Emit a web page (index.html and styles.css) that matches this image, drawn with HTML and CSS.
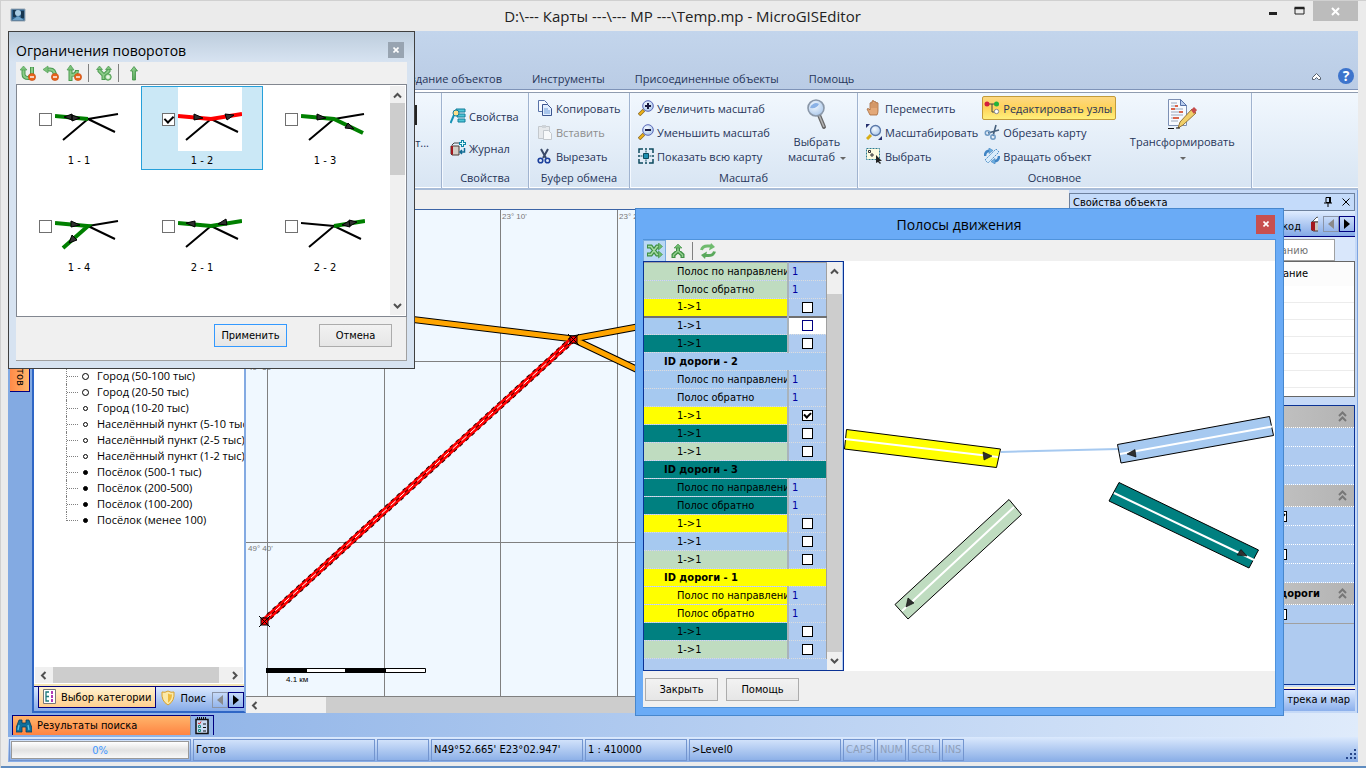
FILE: index.html
```html
<!DOCTYPE html>
<html lang="ru">

<head>
  <meta charset="UTF-8">
  <meta name="viewport" content="width=device-width, initial-scale=1.0">
  <title>D:\--- Карты ---\--- MP ---\Temp.mp - MicroGISEditor</title>
  <link rel="stylesheet" href="styles.css">
</head>

<body>
  <!-- shared shapes -->
  <svg class="defs" width="0" height="0" aria-hidden="true">
    <defs>
      <linearGradient id="green" x1="0" y1="0" x2="1" y2="1">
        <stop offset="0" stop-color="#a5dba0"/>
        <stop offset="1" stop-color="#3f9a45"/>
      </linearGradient>
      <radialGradient id="lens" cx="0.4" cy="0.35" r="0.7">
        <stop offset="0" stop-color="#f4faff"/>
        <stop offset="1" stop-color="#a9c6ea"/>
      </radialGradient>
      <symbol id="chev-up" viewBox="0 0 9 9"><path d="M1 6.500L4.500 3L8 6.500" fill="none" stroke="#505050" stroke-width="2"/></symbol>
      <symbol id="chev-down" viewBox="0 0 9 9"><path d="M1 3L4.500 6.500L8 3" fill="none" stroke="#505050" stroke-width="2"/></symbol>
      <symbol id="chev-left" viewBox="0 0 9 9"><path d="M6.500 1L3 4.500L6.500 8" fill="none" stroke="#505050" stroke-width="2"/></symbol>
      <symbol id="chev-right" viewBox="0 0 9 9"><path d="M3 1L6.500 4.500L3 8" fill="none" stroke="#505050" stroke-width="2"/></symbol>
      <symbol id="collapse" viewBox="0 0 9 11"><path d="M1 5L4.500 1.500L8 5M1 10L4.500 6.500L8 10" fill="none" stroke="#777" stroke-width="2"/></symbol>
      <symbol id="minus-badge" viewBox="0 0 8 8"><circle cx="4" cy="4" r="3.600" fill="#e8641b" stroke="#c24a10" stroke-width=".6"/><path d="M2 4h4" stroke="#fff" stroke-width="1.400"/></symbol>
      <symbol id="book" viewBox="0 0 18 18">
        <path d="M2 7l5-5 2 1v4z" fill="#fff" stroke="#555"/>
        <path d="M1.500 7h8.500v9H3.500l-2-1z" fill="#c9c4bc" stroke="#4a3a34"/>
        <path d="M1 7h4v9L1 15z" fill="#a3171c"/>
      </symbol>
    </defs>
  </svg>

  <header class="titlebar">
    <svg class="app-icon" width="16" height="14" viewBox="0 0 16 14">
      <path d="M1 1h14v12H1z" fill="#2c5f8a" stroke="#9aa8b4"/>
      <path d="M3 2h3v7H3zM11 3h3v7h-3z" fill="#173650"/>
      <circle cx="8" cy="5" r="3" fill="#a9cce3"/>
      <path d="M2 12l6-4 6 4z" fill="#6fa3c9"/>
    </svg>
    <h1 class="app-title">D:\--- Карты ---\--- MP ---\Temp.mp - MicroGISEditor</h1>
    <div class="window-buttons">
      <button type="button" aria-label="Свернуть"><svg width="10" height="12" viewBox="0 0 10 12"><path d="M1 8.500h8" stroke="#222" stroke-width="3"/></svg></button>
      <button type="button" aria-label="Развернуть"><svg width="11" height="12" viewBox="0 0 11 12"><path d="M1 3h9v6H1z" fill="none" stroke="#222"/><path d="M.5 3h10" stroke="#222" stroke-width="2.500"/></svg></button>
      <button type="button" class="window-close" aria-label="Закрыть"><svg width="9" height="9" viewBox="0 0 9 9"><path d="M1 1l7 7M8 1L1 8" stroke="#fff" stroke-width="2"/></svg></button>
    </div>
  </header>

  <main class="app">
    <nav class="ribbon-tabs">
      <a href="#create">Создание объектов</a>
      <a href="#tools">Инструменты</a>
      <a href="#joined">Присоединенные объекты</a>
      <a href="#help">Помощь</a>
      <span class="ribbon-tools">
        <button type="button" aria-label="Свернуть ленту"><svg width="11" height="9" viewBox="0 0 11 9"><path d="M1.500 5.500L5.500 1.500L9.500 5.500V7.500H7.500L5.500 5.500L3.500 7.500H1.500z" fill="#fff" stroke="#55606e"/></svg></button>
        <button type="button" class="help-button" aria-label="Справка">?</button>
      </span>
    </nav>

    <div class="ribbon">
      <section class="group group-first">
        <div class="group-body">
          <span class="clipped-button"><i></i>т...</span>
        </div>
      </section>

      <section class="group group-props">
        <div class="group-body">
          <div class="tool-column roomy">
            <button type="button" class="tool">
              <svg width="16" height="16" viewBox="0 0 16 16"><path d="M6 1h9v3H6zM7 6h8v3H7zM8 11h7v3H8z" fill="#4ec6d6" stroke="#137c9a"/><circle cx="6" cy="5" r="3" fill="#ffe08a" stroke="#137c9a"/><path d="M4 7l-3.500 8" stroke="#1390b4" stroke-width="2"/></svg>
              Свойства
            </button>
            <button type="button" class="tool">
              <svg width="16" height="16" viewBox="0 0 16 16"><path d="M1 6h8v9H2l-1-1z" fill="#d3cdc5" stroke="#4a3a34"/><path d="M1 6h2v9l-2-1z" fill="#a3171c"/><path d="M2 5l2-2h5" fill="none" stroke="#444"/><path d="M12.500 0v7M9 3.500h7" stroke="#0f86a6" stroke-width="3"/><path d="M12.500 1v5M10 3.500h5" stroke="#dff" /><path d="M14.500 8v4h-4m1.500-2l-2 2 2 2" fill="none" stroke="#0f6a92" stroke-width="1.500"/></svg>
              Журнал
            </button>
          </div>
        </div>
        <h2>Свойства</h2>
      </section>

      <section class="group group-clip">
        <div class="group-body">
          <div class="tool-column">
            <button type="button" class="tool">
              <svg width="16" height="16" viewBox="0 0 16 16"><path d="M1.500.5h6l3 3v8h-9z" fill="#f6faff" stroke="#5872a8"/><path d="M5.500 4.500h5l4 4v7h-9z" fill="#e2efff" stroke="#3c558f"/><path d="M7 9h4M7 11h6M7 13h6" stroke="#6f9bd8"/></svg>
              Копировать
            </button>
            <button type="button" class="tool" disabled>
              <svg width="16" height="16" viewBox="0 0 16 16"><path d="M1.500 2.500h11v12h-11z" fill="#e6e9ec" stroke="#c3c8cd"/><path d="M5 1h4v3H5z" fill="#cfd4d9"/><path d="M6.500 6.500h5l3 3v6h-8z" fill="#f7f9fa" stroke="#c3c8cd"/></svg>
              Вставить
            </button>
            <button type="button" class="tool">
              <svg width="16" height="16" viewBox="0 0 16 16"><path d="M4 1l5 9M11 1L6 10" stroke="#3b4a68" stroke-width="2"/><circle cx="3.500" cy="12.500" r="2.300" fill="none" stroke="#1b3f9c" stroke-width="1.600"/><circle cx="10.500" cy="12.500" r="2.300" fill="none" stroke="#1b3f9c" stroke-width="1.600"/></svg>
              Вырезать
            </button>
          </div>
        </div>
        <h2>Буфер обмена</h2>
      </section>

      <section class="group group-zoom">
        <div class="group-body">
          <div class="tool-column">
            <button type="button" class="tool">
              <svg width="16" height="16" viewBox="0 0 16 16"><path d="M6 10l-5 5" stroke="#8a6a2a" stroke-width="3.500"/><path d="M5.500 10.500l-4 4" stroke="#f0b416" stroke-width="2"/><circle cx="10" cy="6" r="5.300" fill="url(#lens)" stroke="#5a68b8"/><path d="M10 3v6M7 6h6" stroke="#1a1a40" stroke-width="2"/></svg>
              Увеличить масштаб
            </button>
            <button type="button" class="tool">
              <svg width="16" height="16" viewBox="0 0 16 16"><path d="M6 10l-5 5" stroke="#8a6a2a" stroke-width="3.500"/><path d="M5.500 10.500l-4 4" stroke="#f0b416" stroke-width="2"/><circle cx="10" cy="6" r="5.300" fill="url(#lens)" stroke="#5a68b8"/><path d="M7 6h6" stroke="#1a1a40" stroke-width="2"/></svg>
              Уменьшить масштаб
            </button>
            <button type="button" class="tool">
              <svg width="16" height="16" viewBox="0 0 16 16"><path d="M1 5V1h4M7 1h2M11 1h4v4M15 7v2M15 11v4h-4M9 15H7M5 15H1v-4M1 9V7" fill="none" stroke="#0c4a5e" stroke-width="1.500"/><path d="M5.500 5.500h5v5h-5z" fill="#1f8fb0" stroke="#0c4a5e"/><path d="M8 2.500v2M8 11.500v2M2.500 8h2M11.500 8h2" stroke="#0c4a5e"/></svg>
              Показать всю карту
            </button>
          </div>
          <button type="button" class="tool-big">
            <svg width="24" height="32" viewBox="0 0 24 32"><path d="M14 17l5 12" stroke="#666" stroke-width="4" stroke-linecap="round"/><path d="M14 17l5 12" stroke="#b5b5b5" stroke-width="1.500"/><circle cx="11" cy="10" r="8" fill="url(#lens)" stroke="#8a97a8" stroke-width="1.600"/><path d="M5 10a6 6 0 0 1 9-4q-2 5-9 4z" fill="#8bb2e6"/></svg>
            <span>Выбрать<br>масштаб <i class="drop"></i></span>
          </button>
        </div>
        <h2>Масштаб</h2>
      </section>

      <section class="group group-main">
        <div class="group-body">
          <div class="tool-column">
            <button type="button" class="tool">
              <svg width="16" height="16" viewBox="0 0 16 16"><path d="M4 15q-2-4-3-6 1-1 2 0l1 1V3q1-1 2 0V1q1-1 2 0v1q1-1 2 0v1q1-1 2 0v8q0 2-1 4z" fill="#e3a878" stroke="#a5683a" stroke-width=".8"/><path d="M6 3v5M8 3v5M10 3v5" stroke="#b87c4c" stroke-width=".7"/></svg>
              Переместить
            </button>
            <button type="button" class="tool">
              <svg width="16" height="16" viewBox="0 0 16 16"><path d="M0 0h4L0 4zM16 16h-4l4-4z" fill="#25306e"/><path d="M5 11l-4 4" stroke="#d8ad16" stroke-width="3"/><circle cx="9.500" cy="6.500" r="5" fill="url(#lens)" stroke="#5a78a8" stroke-width="1.300"/></svg>
              Масштабировать
            </button>
            <button type="button" class="tool">
              <svg width="16" height="16" viewBox="0 0 16 16"><path d="M.5.5h13v11H.5z" fill="#fdfbe0" stroke="#2a7a92" stroke-dasharray="2 1"/><path d="M2.500 2.500h2v2h-2zM5 6h2v2H5z" fill="#fff" stroke="#333"/><path d="M10 7l6 6h-3l2 2-1 1-2-2-2 1z" fill="#222"/></svg>
              Выбрать
            </button>
          </div>
          <div class="tool-column">
            <button type="button" class="tool active">
              <svg width="16" height="16" viewBox="0 0 16 16"><path d="M4 4h9M8 4v8h4" fill="none" stroke="#444"/><circle cx="3" cy="4" r="2.500" fill="#d31f3c"/><circle cx="12.500" cy="4" r="2.500" fill="#23b33a"/><circle cx="12.500" cy="11.500" r="2.200" fill="#fff" stroke="#888"/></svg>
              Редактировать узлы
            </button>
            <button type="button" class="tool">
              <svg width="16" height="16" viewBox="0 0 16 16"><path d="M4 9l11-3M9 12l3-11" stroke="#46607c" stroke-width="1.600"/><circle cx="3.500" cy="9" r="2.200" fill="none" stroke="#6f9ac4" stroke-width="1.500"/><circle cx="9" cy="13" r="2.200" fill="none" stroke="#6f9ac4" stroke-width="1.500"/></svg>
              Обрезать карту
            </button>
            <button type="button" class="tool">
              <svg width="16" height="16" viewBox="0 0 16 16"><path d="M1 12L12 1l3 3L4 15z" fill="#d9ecfb" stroke="#4f90c8" stroke-dasharray="2 1"/><path d="M1 8q0-5 5-5.500M15 8q0 5-5 5.500" fill="none" stroke="#3f84c4" stroke-width="2.500"/><path d="M5 0l4 2.500-4 3zM11 10.500l-4 3 4 2.500z" fill="#6fb0e0" stroke="#3f84c4" stroke-width=".6"/></svg>
              Вращать объект
            </button>
          </div>
          <button type="button" class="tool-big transform">
            <svg width="32" height="32" viewBox="0 0 32 32"><path d="M2.500 1.500h12l6 6v20h-18z" fill="#f7faff" stroke="#7d90b4"/><path d="M14.500 1.500v6h6z" fill="#b9cdee" stroke="#5872a8"/><path d="M5 5h6M5 8h7M5 11h12M5 14h12M5 17h12M5 20h8M5 23h7" stroke="#9aa7bb"/><path d="M9 8h3M5 11h4M13 14h4M7 20h6" stroke="#e0431c" stroke-width="1.300"/><path d="M12 30l2-6L26 11l4 4-13 12z" fill="#f1d06a" stroke="#96763a"/><path d="M25 12l3-3 3 3-3 4z" fill="#c44b4b"/><path d="M2 30.500h6M10 30h4" stroke="#111"/></svg>
            <span>Трансформировать<br><i class="drop"></i></span>
          </button>
        </div>
        <h2>Основное</h2>
      </section>
    </div>

    <div class="workspace">
      <aside class="side-dock">
        <button type="button" class="side-tab">объектов</button>
      </aside>

      <section class="category-panel">
        <ul class="tree">
          <li class="ring">Город (50-100 тыс)</li>
          <li class="ring">Город (20-50 тыс)</li>
          <li class="small-ring">Город (10-20 тыс)</li>
          <li class="small-ring">Населённый пункт (5-10 тыс</li>
          <li class="small-ring">Населённый пункт (2-5 тыс)</li>
          <li class="small-ring">Населённый пункт (1-2 тыс)</li>
          <li class="dot">Посёлок (500-1 тыс)</li>
          <li class="dot">Посёлок (200-500)</li>
          <li class="dot">Посёлок (100-200)</li>
          <li class="dot last">Посёлок (менее 100)</li>
        </ul>
        <div class="hscroll tree-scroll">
          <svg><use href="#chev-left"/></svg>
          <span class="thumb"></span>
          <svg><use href="#chev-right"/></svg>
        </div>
        <div class="panel-tabs">
          <button type="button" class="panel-tab selected">
            <svg width="14" height="16" viewBox="0 0 14 16"><path d="M.5.5h12v14H.5z" fill="#fff" stroke="#777"/><path d="M6 3H3v9h3M3 7.500h3" fill="none" stroke="#1d7a7a" stroke-width="1.300"/><path d="M8 2h2v3H8zM8 6h2v3H8zM8 10h2v3H8z" fill="#b03bb5"/></svg>
            Выбор категории
          </button>
          <button type="button" class="panel-tab search-tab">
            <svg width="16" height="16" viewBox="0 0 16 16"><path d="M8 1q3 2 6 1 1 9-6 13-7-4-6-13 3 1 6-1z" fill="#fbe9a8" stroke="#d9a12a"/><path d="M8 3.500q2 1.200 4 .8 0 6-4 8.500z" fill="#eebb3e"/></svg>
            Поис
          </button>
          <span class="pager">
            <button type="button" disabled aria-label="Назад"><svg width="6" height="10" viewBox="0 0 6 10"><path d="M6 0v10L0 5z" fill="#8a8a8a"/></svg></button>
            <button type="button" aria-label="Вперёд"><svg width="6" height="10" viewBox="0 0 6 10"><path d="M0 0v10l6-5z" fill="#000"/></svg></button>
          </span>
        </div>
      </section>

      <section class="map-pane">
        <svg class="map" aria-label="Карта">
          <!-- coordinate grid -->
          <g stroke="#808080" stroke-width="1" shape-rendering="crispEdges">
            <path d="M21.500 0V600M138.500 0V600M254.500 0V600M371.500 0V600M0 151.500H900M0 332.500H900"/>
          </g>
          <g class="grid-labels">
            <text x="256" y="9">23° 10'</text>
            <text x="373" y="9">23° 20'</text>
            <text x="2" y="160">49° 50'</text>
            <text x="2" y="341">49° 40'</text>
          </g>
          <!-- roads -->
          <g fill="none" stroke="#000" stroke-width="7"><path d="M-10 88L327 129L600 78M327 129L600 259"/></g>
          <g fill="none" stroke="#ffa500" stroke-width="5"><path d="M-10 88L327 129L600 78M327 129L600 259"/></g>
          <path d="M327 129L18 411" stroke="#f00" stroke-width="6"/>
          <path d="M327 129L18 411" stroke="#300" stroke-width="7" stroke-dasharray="4 4"/>
          <path d="M327 129L18 411" stroke="#f00" stroke-width="5"/>
          <path d="M327 129L18 411" stroke="#300" stroke-width="1" stroke-dasharray="5 7" stroke-dashoffset="5"/>
          <path d="M327 129L18 411" stroke="#fff" stroke-width="1" stroke-dasharray="7 5"/>
          <g stroke="#000">
            <path d="M324 126h7v7h-7zM15 408h7v7h-7z" fill="#f00"/>
            <path d="M322 124l11 11M333 124l-11 11M13 406l11 11M24 406l-11 11"/>
          </g>
          <!-- scale bar -->
          <path d="M20.500 458.500h159v4h-159z" fill="#fff" stroke="#000"/>
          <path d="M20 458h41v5H20zM99 458h41v5H99z"/>
          <text class="scale-text" x="40" y="472">4.1 км</text>
        </svg>
        <div class="hscroll map-scroll">
          <svg><use href="#chev-left"/></svg>
          <span class="thumb"></span>
        </div>
      </section>

      <aside class="props-panel">
        <div class="props-title">
          <h2>Свойства объекта</h2>
          <button type="button" aria-label="Закрепить"><svg width="8" height="10" viewBox="0 0 8 10"><path d="M2 .5h4v5H2zM0 6h8M4 6v4" fill="none" stroke="#000"/><path d="M5 0h2v6H5z"/></svg></button>
          <button type="button" aria-label="Закрыть"><svg width="8" height="8" viewBox="0 0 8 8"><path d="M.5.5l7 7M7.500.5l-7 7" stroke="#000"/></svg></button>
        </div>
        <div class="props-tabs">
          <span class="props-tab">код</span>
          <svg width="8" height="18" viewBox="0 0 8 18"><use href="#book" width="18" height="18"/></svg>
          <span class="pager">
            <button type="button" disabled aria-label="Назад"><svg width="6" height="10" viewBox="0 0 6 10"><path d="M6 0v10L0 5z" fill="#8a8a8a"/></svg></button>
            <button type="button" aria-label="Вперёд"><svg width="6" height="10" viewBox="0 0 6 10"><path d="M0 0v10l6-5z" fill="#000"/></svg></button>
          </span>
        </div>
        <div class="props-search">
          <input type="text" placeholder="названию" aria-label="Поиск по названию">
        </div>
        <div class="props-list">
          <div class="props-list-head">Описание</div>
        </div>
        <div class="props-grid">
          <div class="category"><svg><use href="#collapse"/></svg></div>
          <div class="prop"></div>
          <div class="prop"></div>
          <div class="prop"></div>
          <div class="category"><svg><use href="#collapse"/></svg></div>
          <div class="prop"><input type="checkbox" class="box" checked aria-label="Свойство 1"></div>
          <div class="prop"></div>
          <div class="prop"><input type="checkbox" class="box" aria-label="Свойство 2"></div>
          <div class="prop"></div>
          <div class="category"><b>дороги</b><svg><use href="#collapse"/></svg></div>
          <div class="prop last"><input type="checkbox" class="box" aria-label="Свойство 3"></div>
        </div>
        <div class="props-foot">и трека и мар</div>
      </aside>
    </div>

    <div class="bottom-dock">
      <button type="button" class="results-tab">
        <svg width="16" height="14" viewBox="0 0 16 14"><path d="M3 1h3v3h4V1h3l3 8v4h-6V8H6v5H0V9z" fill="#0f6f9c" stroke="#0a3c58" stroke-width=".8"/><path d="M3 6l-1 5M12 6l1 5" stroke="#5fc3e6" stroke-width="1.300"/></svg>
        Результаты поиска
      </button>
      <button type="button" class="list-tab" aria-label="Список">
        <svg width="14" height="18" viewBox="0 0 14 18"><path d="M1 2.500h12v14H1z" fill="#c8daf4" stroke="#111" stroke-width="1.500"/><path d="M2.500 0v3M4.500 0v3M6.500 0v3M8.500 0v3M10.500 0v3" stroke="#111"/><path d="M3 6l1.500 1L6 4.500" fill="none" stroke="#d22"/><path d="M3.500 8.500h2v2h-2zM3.500 12.500h2v2h-2z" fill="none" stroke="#1c8a7c"/><path d="M8 7h3M8 10.500h3M8 14h3" stroke="#111"/></svg>
      </button>
    </div>

    <footer class="status">
      <div class="pane progress-pane"><div class="progress">0%</div></div>
      <div class="pane ready">Готов</div>
      <div class="pane empty"></div>
      <div class="pane coords">N49°52.665' E23°02.947'</div>
      <div class="pane scale">1 : 410000</div>
      <div class="pane level">&gt;Level0</div>
      <div class="pane key">CAPS</div>
      <div class="pane key">NUM</div>
      <div class="pane key">SCRL</div>
      <div class="pane key">INS</div>
      <svg class="grip" width="12" height="12" viewBox="0 0 12 12"><path d="M9 1h2v2H9zM5 5h2v2H5zM9 5h2v2H9zM1 9h2v2H1zM5 9h2v2H5zM9 9h2v2H9z" fill="#26458a"/></svg>
    </footer>
  </main>
  <div class="taskbar"></div>

  <!-- turn restrictions dialog -->
  <section class="dialog turns" role="dialog" aria-labelledby="turns-title">
    <div class="dialog-title">
      <h2 id="turns-title">Ограничения поворотов</h2>
      <button type="button" class="dialog-close" aria-label="Закрыть"><svg width="6" height="6" viewBox="0 0 6 6"><path d="M.5.5l5 5M5.500.5l-5 5" stroke="#fff" stroke-width="1.600"/></svg></button>
    </div>
    <div class="dialog-toolbar">
      <button type="button" aria-label="Запретить разворот"><svg width="16" height="16" viewBox="0 0 16 16"><path d="M3.500 4v5q0 4 5 4l3.500-3V2" fill="none" stroke="#4a9a4e" stroke-width="4"/><path d="M3.500 4v5q0 4 5 4l3.500-3V2.500" fill="none" stroke="#8ccb88" stroke-width="2"/><path d="M0 5l3.500-4L7 5z" fill="#7cc27a" stroke="#4b9b4e" stroke-width=".6"/><use href="#minus-badge" x="8" y="8" width="8" height="8"/></svg></button>
      <button type="button" aria-label="Запретить поворот"><svg width="16" height="16" viewBox="0 0 16 16"><path d="M4 4.500h3q5 0 5 7" fill="none" stroke="#4a9a4e" stroke-width="4"/><path d="M4 4.500h3q5 0 5 7" fill="none" stroke="#8ccb88" stroke-width="2"/><path d="M0 4.500L5 1v7z" fill="#7cc27a" stroke="#4b9b4e" stroke-width=".6"/><use href="#minus-badge" x="8" y="8" width="8" height="8"/></svg></button>
      <button type="button" aria-label="Запретить примыкание"><svg width="16" height="16" viewBox="0 0 16 16"><path d="M4.500 4v12M5 10q6 0 6-5" fill="none" stroke="#4a9a4e" stroke-width="4"/><path d="M4.500 4v11M5 10q6 0 6-4" fill="none" stroke="#8ccb88" stroke-width="2"/><path d="M1 5l3.500-5L8 5z" fill="#7cc27a" stroke="#3f9044" stroke-width=".6"/><use href="#minus-badge" x="8" y="8" width="8" height="8"/></svg></button>
      <i class="sep"></i>
      <button type="button" aria-label="Добавить"><svg width="16" height="16" viewBox="0 0 16 16"><path d="M3.500 4v2l4 4v5M12.500 4v2l-4 4" fill="none" stroke="#4a9a4e" stroke-width="4"/><path d="M3.500 4v2l4 4v4M12.500 4v2l-4 4" fill="none" stroke="#8ccb88" stroke-width="2"/><path d="M.5 4.500L3.500 1 6.500 4.500zM9.500 4.500L12.500 1 15.500 4.500z" fill="#7cc27a" stroke="#3f9044" stroke-width=".6"/><circle cx="12" cy="12" r="3.200" fill="#a4d79d" stroke="#4b9b4e"/><path d="M12 10v4M10 12h4" stroke="#fff"/></svg></button>
      <i class="sep"></i>
      <button type="button" aria-label="Прямо"><svg width="16" height="16" viewBox="0 0 16 16"><path d="M6.500 15V6H4.500L8 1.500 11.500 6H9.500V15z" fill="url(#green)" stroke="#3f9044" stroke-width=".8"/></svg></button>
    </div>
    <div class="turn-box">
      <div class="turn-list">
        <div class="turn">
          <input type="checkbox" id="t11">
          <svg class="pic" viewBox="0 0 64 64"><path d="M33 32L63 27M33 32L60 45M33 32L8 53"/><path class="go" d="M0 29L33 32"/><path class="arrow" d="M9 30l8-3v6zM25 31l-8-3v6z"/></svg>
          <label for="t11">1 - 1</label>
        </div>
        <div class="turn selected">
          <input type="checkbox" id="t12" checked>
          <svg class="pic" viewBox="0 0 64 64"><rect width="64" height="64" fill="#fff" stroke="none"/><path d="M33 32L60 45M33 32L8 53"/><path class="stop" d="M0 29L33 32L64 27"/><path class="arrow" d="M25 31l-9-4v6zM56 28l-9-1 2 6z"/></svg>
          <label for="t12">1 - 2</label>
        </div>
        <div class="turn">
          <input type="checkbox" id="t13">
          <svg class="pic" viewBox="0 0 64 64"><path d="M33 32L63 27M33 32L8 53"/><path class="go" d="M0 29L33 32L62 46"/><path class="arrow" d="M25 31l-9-4v6zM53 42l-9-1 3-5z"/></svg>
          <label for="t13">1 - 3</label>
        </div>
        <div class="turn">
          <input type="checkbox" id="t14">
          <svg class="pic" viewBox="0 0 64 64"><path d="M33 32L63 27M33 32L60 45"/><path class="go" d="M0 29L33 32L8 54"/><path class="arrow" d="M25 31l-9-4v6zM14 49l3-8 5 5z"/></svg>
          <label for="t14">1 - 4</label>
        </div>
        <div class="turn">
          <input type="checkbox" id="t21">
          <svg class="pic" viewBox="0 0 64 64"><path d="M33 32L60 45M33 32L8 53"/><path class="go" d="M0 29L33 32L64 27"/><path class="arrow" d="M8 29l9-2v6zM40 30l8-5 1 6z"/></svg>
          <label for="t21">2 - 1</label>
        </div>
        <div class="turn">
          <input type="checkbox" id="t22">
          <svg class="pic" viewBox="0 0 64 64"><path d="M0 29L33 32L60 45M33 32L8 53"/><path class="go" d="M33 32L64 27"/><path class="arrow" d="M41 31l7-4 1 6zM56 28l-8-2 1 6z"/></svg>
          <label for="t22">2 - 2</label>
        </div>
      </div>
      <div class="vscroll turn-scroll">
        <svg><use href="#chev-up"/></svg>
        <span class="thumb"></span>
        <svg><use href="#chev-down"/></svg>
      </div>
    </div>
    <div class="turn-actions">
      <button type="button" class="push primary">Применить</button>
      <button type="button" class="push">Отмена</button>
    </div>
  </section>

  <!-- lanes dialog -->
  <section class="dialog lanes" role="dialog" aria-labelledby="lanes-title">
    <div class="dialog-title">
      <h2 id="lanes-title">Полосы движения</h2>
      <button type="button" class="dialog-close" aria-label="Закрыть"><svg width="6" height="6" viewBox="0 0 6 6"><path d="M.5.5l5 5M5.500.5l-5 5" stroke="#fff" stroke-width="1.600"/></svg></button>
    </div>
    <div class="lanes-body">
      <div class="dialog-toolbar">
        <button type="button" class="pressed" aria-label="Связи"><svg width="16" height="16" viewBox="0 0 16 16"><path d="M0 3.500h4l6 8h2M0 11.500h4l6-8h2" fill="none" stroke="#3f9044" stroke-width="4"/><path d="M1 3.500h3l6 8h1.500M1 11.500h3l6-8h1.500" fill="none" stroke="#a6dba2" stroke-width="1.500"/><path d="M11.500 0l4 3.500-4 3.500zM11.500 8l4 3.500-4 3.500z" fill="#6fbb6e" stroke="#3f9044" stroke-width=".6"/></svg></button>
        <button type="button" aria-label="Слияние"><svg width="16" height="16" viewBox="0 0 16 16"><path d="M3.500 15v-3l4.500-4 4.500 4v3M8 9V4" fill="none" stroke="#3f9044" stroke-width="4"/><path d="M3.500 14v-2l4.500-4 4.500 4v2M8 9V4" fill="none" stroke="#93d08f" stroke-width="1.500"/><path d="M4 5L8 1l4 4z" fill="#6fbb6e" stroke="#3f9044" stroke-width=".6"/></svg></button>
        <i class="sep"></i>
        <button type="button" aria-label="Обновить"><svg width="18" height="16" viewBox="0 0 18 16"><path d="M2.500 7q1-4 6-4h4" fill="none" stroke="#6fbb6e" stroke-width="3"/><path d="M12 0l4 4-6 3.500z" fill="#6fbb6e"/><path d="M15.500 8.500q-1 4-6 4h-4" fill="none" stroke="#5aa95c" stroke-width="3"/><path d="M6 16l-4-4 6-3.500z" fill="#5aa95c"/></svg></button>
      </div>
      <div class="lanes-main">
        <div class="lane-grid">
          <table>
            <tbody>
              <tr class="c-green"><td>Полос по направлени</td><td class="num">1</td></tr>
              <tr class="c-green"><td>Полос обратно</td><td class="num">1</td></tr>
              <tr class="c-yellow"><td>1-&gt;1</td><td><input type="checkbox" class="box" aria-label="4: 1-&gt;1 дорога 1"></td></tr>
              <tr class="c-blue current"><td>1-&gt;1</td><td><input type="checkbox" class="box" aria-label="4: 1-&gt;1 дорога 2"></td></tr>
              <tr class="c-teal"><td>1-&gt;1</td><td><input type="checkbox" class="box" aria-label="4: 1-&gt;1 дорога 3"></td></tr>
              <tr class="c-blue head"><th colspan="2">ID дороги - 2</th></tr>
              <tr class="c-blue"><td>Полос по направлени</td><td class="num">1</td></tr>
              <tr class="c-blue"><td>Полос обратно</td><td class="num">1</td></tr>
              <tr class="c-yellow"><td>1-&gt;1</td><td><input type="checkbox" class="box" checked aria-label="2: 1-&gt;1 дорога 1"></td></tr>
              <tr class="c-teal"><td>1-&gt;1</td><td><input type="checkbox" class="box" aria-label="2: 1-&gt;1 дорога 3"></td></tr>
              <tr class="c-green"><td>1-&gt;1</td><td><input type="checkbox" class="box" aria-label="2: 1-&gt;1 дорога 4"></td></tr>
              <tr class="c-teal head"><th colspan="2">ID дороги - 3</th></tr>
              <tr class="c-teal"><td>Полос по направлени</td><td class="num">1</td></tr>
              <tr class="c-teal"><td>Полос обратно</td><td class="num">1</td></tr>
              <tr class="c-yellow"><td>1-&gt;1</td><td><input type="checkbox" class="box" aria-label="3: 1-&gt;1 дорога 1"></td></tr>
              <tr class="c-blue"><td>1-&gt;1</td><td><input type="checkbox" class="box" aria-label="3: 1-&gt;1 дорога 2"></td></tr>
              <tr class="c-green"><td>1-&gt;1</td><td><input type="checkbox" class="box" aria-label="3: 1-&gt;1 дорога 4"></td></tr>
              <tr class="c-yellow head"><th colspan="2">ID дороги - 1</th></tr>
              <tr class="c-yellow"><td>Полос по направлени</td><td class="num">1</td></tr>
              <tr class="c-yellow"><td>Полос обратно</td><td class="num">1</td></tr>
              <tr class="c-teal"><td>1-&gt;1</td><td><input type="checkbox" class="box" aria-label="1: 1-&gt;1 дорога 3"></td></tr>
              <tr class="c-green"><td>1-&gt;1</td><td><input type="checkbox" class="box" aria-label="1: 1-&gt;1 дорога 4"></td></tr>
            </tbody>
          </table>
          <div class="vscroll lane-scroll">
            <svg><use href="#chev-up"/></svg>
            <span class="thumb"></span>
            <svg><use href="#chev-down"/></svg>
          </div>
        </div>
        <svg class="lane-canvas" aria-label="Схема полос">
          <path d="M157 191L274 188" stroke="#a6c9f0" stroke-width="2"/>
          <g stroke="#000">
            <path d="M2.500 168.500L156.500 188L152.500 206.500L.5 188z" fill="#ff0"/>
            <path d="M273.500 183.500L425.500 155.500L429.500 174.500L277 202z" fill="#a6c9f0"/>
            <path d="M275 221.500L414.500 289L405 307L265 240z" fill="#008080"/>
            <path d="M165 238.500L177.500 253.500L64 358L51 343.500z" fill="#bfdcc0"/>
          </g>
          <g stroke="#fff" stroke-width="2">
            <path d="M1 178L154 196M276 193L428 165.500M270 232L410 299M170 246L58 350"/>
          </g>
          <g fill="#303030" stroke="#000" stroke-width=".6">
            <path d="M148 195L139 191L140 199zM283 193L291 188.500L292 196zM403 295L397 288.500L393 294zM62 346L64 337L70 342z"/>
          </g>
        </svg>
      </div>
      <div class="lanes-actions">
        <button type="button" class="push">Закрыть</button>
        <button type="button" class="push">Помощь</button>
      </div>
    </div>
  </section>
</body>

</html>
```
FILE: styles.css
```css
* {
  margin: 0;
  padding: 0;
  box-sizing: border-box;
}

body {
  position: relative;
  display: flex;
  flex-direction: column;
  height: 100vh;
  min-height: 720px;
  overflow: hidden;
  background: #ebebeb;
  border-top: 1px solid #d0d0d0;
  border-left: 1px solid #d0d0d0;
  font-family: 'DejaVu Sans Condensed', 'DejaVu Sans', sans-serif;
  font-size: 11px;
  color: #000;
}

button {
  font: inherit;
  color: inherit;
  background: none;
  border: 0;
}

h1,
h2 {
  font-weight: normal;
}

svg {
  display: block;
  flex: none;
}

.defs {
  position: absolute;
}

/* main window */
.titlebar {
  display: flex;
  flex: none;
  height: 30px;
  padding: 0 8px 0 9px;
}

.app-icon {
  margin-top: 7px;
}

.app-title {
  flex: 1;
  padding-left: 80px;
  font-family: 'Open Sans', 'Noto Sans', sans-serif;
  font-size: 15px;
  line-height: 30px;
  text-align: center;
  color: #222;
}

.window-buttons {
  display: flex;
}

.window-buttons button {
  display: flex;
  justify-content: center;
  width: 27px;
  height: 20px;
  padding-top: 4px;
}

.window-buttons .window-close {
  width: 45px;
  padding-top: 6px;
  background: #bcbcbc;
}

.app {
  display: flex;
  flex: 1;
  flex-direction: column;
  min-height: 0;
  margin: 0 8px 0 7px;
}

.ribbon-tabs {
  display: flex;
  flex: none;
  align-items: flex-end;
  gap: 30px;
  height: 59px;
  padding: 0 4px 2px 389px;
  background: linear-gradient(#c3d5ec, #bacce5);
  border-bottom: 1px solid #7e93b8;
  font-family: 'Open Sans', 'Noto Sans', sans-serif;
}

.ribbon-tabs a {
  line-height: 16px;
  color: #263559;
  text-decoration: none;
  white-space: nowrap;
}

.ribbon-tools {
  display: flex;
  align-items: center;
  gap: 16px;
  margin-left: auto;
  padding-bottom: 3px;
}

.help-button {
  width: 16px;
  height: 16px;
  background: #3d74cc;
  border-radius: 50%;
  font-size: 14px;
  font-weight: bold;
  line-height: 16px;
  color: #fff;
}

.ribbon {
  display: flex;
  flex: none;
  height: 100px;
  padding-top: 3px;
  background: linear-gradient(#f2f8fe, #d8e5f3);
  border-bottom: 2px solid #a8bcd8;
  box-shadow: inset 0 -1px #fff, inset 0 2px #fff, inset 0 3px #8f9cb0;
  font-family: 'Open Sans', 'Noto Sans', sans-serif;
  color: #263559;
}

.group {
  display: flex;
  flex: none;
  flex-direction: column;
  border-right: 1px solid #a0b3cf;
  box-shadow: 1px 0 #f4f9ff;
}

.group-first { width: 434px; }
.group-props { width: 87px; }
.group-clip { width: 101px; }
.group-zoom { width: 228px; }
.group-main { width: 394px; }

.group h2 {
  font-size: 11px;
  line-height: 16px;
  text-align: center;
}

.group-body {
  display: flex;
  height: 77px;
  padding: 3px 0 0 6px;
}

.clipped-button {
  display: flex;
  flex-direction: column;
  align-items: flex-end;
  width: 100%;
  padding: 9px 12px 0 0;
  line-height: 36px;
}

.clipped-button i {
  width: 24px;
  height: 20px;
  margin-right: 12px;
  background: #222;
}

.tool-column {
  display: flex;
  flex-direction: column;
  align-items: flex-start;
}

.roomy {
  gap: 8px;
  padding-top: 8px;
}

.tool {
  display: flex;
  align-items: center;
  gap: 3px;
  height: 24px;
  padding: 0 3px 0 1px;
  border: 1px solid transparent;
  border-radius: 2px;
  white-space: nowrap;
}

.tool:disabled {
  color: #8d8d8d;
}

.tool.active {
  background: linear-gradient(#fdd882, #fed35a 50%, #fff07c);
  border-color: #c29b3a;
}

.tool-big {
  display: flex;
  flex-direction: column;
  align-items: center;
  width: 78px;
  margin-left: 4px;
  padding-top: 2px;
  line-height: 15px;
  white-space: nowrap;
}

.tool-big.transform {
  width: 124px;
}

.tool-big span {
  padding-top: 4px;
}

.drop {
  display: inline-block;
  margin-left: 2px;
  border: 3px solid transparent;
  border-top-color: #666;
  border-bottom: 0;
  vertical-align: middle;
}

/* docked panels */
.workspace {
  display: flex;
  flex: 1;
  min-height: 0;
  background: #c5d9f7;
}

.side-dock {
  width: 24px;
  padding: 10px 2px;
  background: #83aae2;
}

.side-tab {
  width: 20px;
  height: 192px;
  padding-bottom: 5px;
  background: linear-gradient(90deg, #ff8a48, #ffb76b);
  border: 1px solid #000080;
  border-left: 0;
  line-height: 18px;
  text-align: right;
  writing-mode: vertical-rl;
}

.category-panel {
  display: flex;
  flex-direction: column;
  width: 214px;
  background: #fff;
  border: 2px solid #2f66c5;
  border-right-color: #83aae2;
}

.tree {
  flex: 1;
  padding: 176px 0 0 32px;
  overflow: hidden;
  font-family: 'Open Sans', 'Noto Sans', sans-serif;
  list-style: none;
}

.tree li {
  position: relative;
  height: 16px;
  padding-left: 30px;
  border-left: 1px dotted #808080;
  line-height: 16px;
  white-space: nowrap;
}

.tree li::before {
  position: absolute;
  top: 8px;
  left: 0;
  width: 11px;
  border-top: 1px dotted #808080;
  content: '';
}

.tree li::after {
  position: absolute;
  top: 6px;
  left: 16px;
  width: 3px;
  height: 3px;
  border: 1px solid #000;
  border-radius: 50%;
  content: '';
}

.tree .ring::after {
  top: 5px;
  left: 15px;
  width: 5px;
  height: 5px;
}

.tree .dot::after {
  background: #000;
}

.tree .last {
  height: 9px;
}

.hscroll,
.vscroll {
  display: flex;
  flex: none;
  align-items: center;
  background: #f0f0f0;
}

.hscroll svg,
.vscroll svg {
  width: 9px;
  height: 9px;
}

.thumb {
  background: #cdcdcd;
}

.hscroll .thumb {
  align-self: stretch;
}

.vscroll {
  flex-direction: column;
  width: 15px;
}

.vscroll .thumb {
  width: 15px;
}

.tree-scroll {
  justify-content: space-between;
  height: 16px;
  margin: 0 1px;
  padding: 0 4px;
}

.tree-scroll .thumb {
  width: 166px;
  margin-right: 6px;
}

.panel-tabs {
  display: flex;
  height: 27px;
  margin-top: 1px;
  padding: 2px 0 3px 4px;
  background: linear-gradient(#ddebff, #86abe8);
  border-top: 2px solid #f5e6b5;
  box-shadow: inset 0 1px #000080;
}

.panel-tab {
  display: flex;
  align-items: center;
  gap: 4px;
  padding: 0 4px;
  white-space: nowrap;
}

.panel-tab.selected {
  margin-top: -1px;
  background: linear-gradient(#fff2cf, #ffd08f);
  border: 1px solid #000080;
  border-top: 0;
}

.search-tab {
  flex: 1;
  min-width: 0;
  padding-right: 0;
}

.pager {
  display: flex;
}

.pager button {
  display: flex;
  align-items: center;
  justify-content: center;
  width: 16px;
  height: 16px;
  border: 1px solid #000080;
}

.pager button:disabled {
  border-color: #8a94a8;
}

.panel-tabs .pager {
  align-self: flex-end;
}

.map-pane {
  display: flex;
  flex: 1;
  flex-direction: column;
  min-width: 0;
  padding-top: 19px;
  background: #f0f0f0;
}

.map {
  flex: 1;
  width: 100%;
  min-height: 0;
  background: #f0f8ff;
  border-top: 1px solid #3c64a6;
}

.grid-labels text,
.scale-text {
  font-family: 'Liberation Sans', sans-serif;
  font-size: 8px;
  fill: #777;
}

.scale-text {
  fill: #000;
}

.map-scroll {
  height: 17px;
  padding-left: 4px;
  border-top: 1px solid #808080;
}

.map-scroll .thumb {
  flex: 1;
  margin-left: 67px;
}

.props-panel {
  display: flex;
  flex-direction: column;
  width: 289px;
  padding: 3px 2px 2px 0;
  background: #c5d9f7;
  border-right: 1px solid #7ca3e0;
}

.props-title {
  display: flex;
  align-items: center;
  gap: 10px;
  height: 18px;
  padding: 0 4px 0 3px;
  background: #c4dbfa;
  border: 1px solid #6d819e;
}

.props-title h2 {
  flex: 1;
  font-size: 11px;
}

.props-tabs {
  display: flex;
  flex: none;
  align-items: center;
  height: 26px;
  background: linear-gradient(#dfecff, #84a9e6);
  border-bottom: 1px solid #000080;
  box-shadow: 0 2px #ffc982;
}

.props-tab {
  flex: 1;
  padding: 6px 5px 0 0;
  text-align: right;
}

.props-tabs > svg {
  margin: 0 5px 0 4px;
}

.props-search {
  flex: none;
  height: 24px;
  padding: 2px 20px 0 4px;
  background: #d9e7fb;
}

.props-search input {
  width: 100%;
  height: 22px;
  padding-right: 26px;
  border: 1px solid #a0a0a0;
  font: inherit;
  text-align: right;
}

.props-list {
  flex: none;
  height: 136px;
  background: repeating-linear-gradient(#fff 0 16px, #ececec 16px 17px) 0 24px;
  border: 1px solid #666;
}

.props-list-head {
  height: 24px;
  padding-right: 46px;
  background: #fcfcfc;
  line-height: 24px;
  text-align: right;
}

.props-grid {
  flex: 1;
  min-height: 0;
  margin-top: 8px;
  overflow: hidden;
  background: #afcbf0;
  border: 1px solid #0a3295;
}

.props-grid > div {
  display: flex;
  align-items: center;
  justify-content: flex-end;
  border-bottom: 1px dotted #fff;
}

.props-grid .category {
  height: 22px;
  padding-right: 7px;
  background: linear-gradient(90deg, #e4e4e4, #b3b3b3);
}

.category b {
  margin-right: 18px;
}

.category svg {
  width: 9px;
  height: 11px;
}

.props-grid .prop {
  height: 19px;
  padding-right: 67px;
}

.props-grid .last {
  border-bottom: 1px solid #a0a0a0;
}

.props-foot {
  flex: none;
  height: 22px;
  margin-top: 4px;
  padding-right: 5px;
  background: linear-gradient(#dbe9ff, #8cb0ec);
  border-top: 1px solid #000080;
  box-shadow: 0 -2px #fff2cf;
  line-height: 20px;
  text-align: right;
}

.bottom-dock {
  display: flex;
  flex: none;
  height: 24px;
  padding: 2px 4px;
  background: linear-gradient(90deg, #86ade5, #dfebfb);
}

.results-tab,
.list-tab {
  display: flex;
  align-items: center;
  gap: 5px;
  border: 1px solid #000080;
  border-bottom: 0;
}

.results-tab {
  width: 178px;
  padding-left: 3px;
  background: linear-gradient(#ffb56b, #ff8442);
  border-right: 0;
}

.list-tab {
  width: 24px;
  justify-content: center;
  border-left-color: #8a94a8;
}

/* status bar */
.status {
  display: flex;
  flex: none;
  gap: 2px;
  height: 25px;
  padding: 2px 1px;
  background: linear-gradient(#dbe9fd, #87ace6);
}

.pane {
  height: 22px;
  padding-left: 2px;
  border: 1px solid #7395cf;
  line-height: 20px;
  white-space: nowrap;
}

.progress-pane { width: 182px; padding: 1px; }
.ready { width: 182px; }
.empty { width: 52px; }
.coords { width: 152px; }
.scale { width: 102px; }
.level { width: 152px; }

.pane.key {
  padding: 0 2px;
  color: #8e9fba;
}

.progress {
  height: 18px;
  background: linear-gradient(#fff, #e2e2e2 50%, #f8f8f8);
  border: 1px solid #999;
  line-height: 17px;
  text-align: center;
  color: #3c96ff;
}

.grip {
  align-self: flex-end;
  margin-left: auto;
}

.taskbar {
  flex: none;
  height: 2px;
  margin: 4px 0 0 -1px;
  background: #5f8cc0;
}

/* dialogs */
.dialog {
  position: absolute;
  display: flex;
  flex-direction: column;
}

.dialog-title {
  display: flex;
  align-items: center;
  font-family: 'Open Sans', 'Noto Sans', sans-serif;
}

.dialog-title h2 {
  flex: 1;
  font-size: 14px;
}

.dialog-close {
  display: flex;
  align-items: center;
  justify-content: center;
}

.dialog-toolbar {
  display: flex;
  flex: none;
  align-items: center;
  height: 22px;
  background: #f0f0f0;
}

.dialog-toolbar button {
  display: flex;
  align-items: center;
  justify-content: center;
  width: 23px;
  height: 22px;
}

.dialog-toolbar .pressed {
  background: #b9d8f5;
  border: 1px solid #78abe0;
}

.sep {
  width: 1px;
  height: 18px;
  margin: 0 3px;
  background: #808080;
}

.push {
  width: 73px;
  height: 23px;
  background: linear-gradient(#f2f2f2, #e6e6e6);
  border: 1px solid #acacac;
}

.push.primary {
  border-color: #3399ff;
}

.turns {
  top: 30px;
  left: 7px;
  width: 407px;
  padding: 0 7px 7px;
  background: linear-gradient(#bdcddd, #d7e3f1 30px);
  border: 1px solid #404040;
}

.turns .dialog-title {
  height: 30px;
  padding-top: 6px;
}

.turns .dialog-close {
  width: 16px;
  height: 16px;
  margin-right: 3px;
  background: #98a4b1;
}

.turn-box {
  display: flex;
  height: 233px;
  padding: 1px;
  background: #fff;
  border: 1px solid #828790;
}

.turn-list {
  display: grid;
  flex: 1;
  grid-template-columns: repeat(3, 122px);
  gap: 23px 1px;
  align-content: start;
}

.turn {
  display: grid;
  grid-template-rows: 64px 18px;
  grid-template-columns: 16px 64px;
  justify-content: center;
  height: 84px;
  border: 1px solid transparent;
}

.turn.selected {
  background: #cbe8f6;
  border-color: #26a0da;
}

.turn input,
.box {
  appearance: none;
  width: 13px;
  height: 13px;
  background: #fff;
  border: 1px solid #707070;
}

.turn input {
  align-self: center;
}

.turn input:checked::before,
.box:checked::before {
  display: block;
  width: 4px;
  height: 7px;
  margin: 0 auto;
  border: solid #000;
  border-width: 0 2px 2px 0;
  transform: rotate(45deg);
  content: '';
}

.turn label {
  grid-column: 1 / 3;
  line-height: 20px;
  text-align: center;
}

.pic {
  width: 64px;
  height: 64px;
  fill: none;
  stroke: #000;
  stroke-width: 2;
}

.pic .go {
  stroke: #008000;
  stroke-width: 4;
}

.pic .stop {
  stroke: #f00;
  stroke-width: 4;
}

.pic .arrow {
  fill: #303030;
  stroke-width: 1;
}

.turn-scroll {
  padding: 5px 0;
}

.turn-scroll .thumb {
  height: 72px;
  margin: 3px 0 auto;
}

.turn-actions {
  display: flex;
  justify-content: flex-end;
  gap: 32px;
  height: 44px;
  padding: 7px 14px;
  background: #f0f0f0;
  border: solid #a0a0a0;
  border-width: 0 1px 1px 0;
}

.lanes {
  top: 207px;
  left: 634px;
  width: 649px;
  height: 508px;
  padding: 0 7px 7px;
  background: #6aabf6;
  border: 1px solid #4787cd;
}

.lanes .dialog-title {
  height: 30px;
}

.lanes .dialog-title h2 {
  padding-left: 19px;
  text-align: center;
}

.lanes .dialog-close {
  width: 19px;
  height: 19px;
  margin-right: 1px;
  background: #c75050;
}

.lanes-body {
  display: flex;
  flex: 1;
  flex-direction: column;
  min-height: 0;
  background: #f0f0f0;
  border: 1px solid #4f93dc;
  border-width: 1px 1px 1px 0;
}

.lanes .dialog-toolbar {
  height: 21px;
}

.lanes-main {
  display: flex;
  flex: 1;
  min-height: 0;
  background: #fff;
}

.lane-grid {
  display: flex;
  align-items: flex-start;
  width: 201px;
  background: #afcbf0;
  border: 1px solid #0a3295;
}

.lane-grid table {
  flex: 1;
  border-collapse: collapse;
  border-top: 1px solid #a0a0a0;
  border-right: 1px solid #a0a0a0;
}

.lane-grid td,
.lane-grid th {
  height: 18px;
  padding: 0;
  overflow: hidden;
  border-bottom: 1px dotted #ddd;
  line-height: 16px;
  text-align: left;
  white-space: nowrap;
}

.lane-grid th {
  padding-left: 20px;
}

.lane-grid td:first-child {
  width: 144px;
  max-width: 144px;
  padding-left: 33px;
  border-right: 2px solid #a9b3bb;
}

.lane-grid td:last-child {
  background: #afcbf0;
  text-align: center;
}

.lane-grid td.num {
  padding-left: 3px;
  text-align: left;
  color: #0000a0;
}

.lane-grid .current td {
  border-top: 2px solid #707070;
  line-height: 14px;
}

.lane-grid .current td:last-child {
  background: #fff;
}

.box {
  width: 11px;
  height: 11px;
  border-color: #000;
  vertical-align: middle;
}

.box:checked::before {
  width: 3px;
  height: 5px;
}

.current .box {
  border-color: #000080;
}

.c-green { background: #bfdcc0; }
.c-yellow { background: #ffff00; }
.c-blue { background: #a6c9f0; }
.c-teal { background: #008080; }

.lane-scroll {
  align-self: stretch;
  margin-right: 1px;
  padding: 5px 0;
}

.lane-scroll .thumb {
  flex: 1;
  margin: 18px 0 4px;
}

.lane-canvas {
  flex: 1;
  height: 100%;
}

.lanes-actions {
  display: flex;
  flex: none;
  gap: 8px;
  height: 36px;
  padding: 7px 2px;
}
```
